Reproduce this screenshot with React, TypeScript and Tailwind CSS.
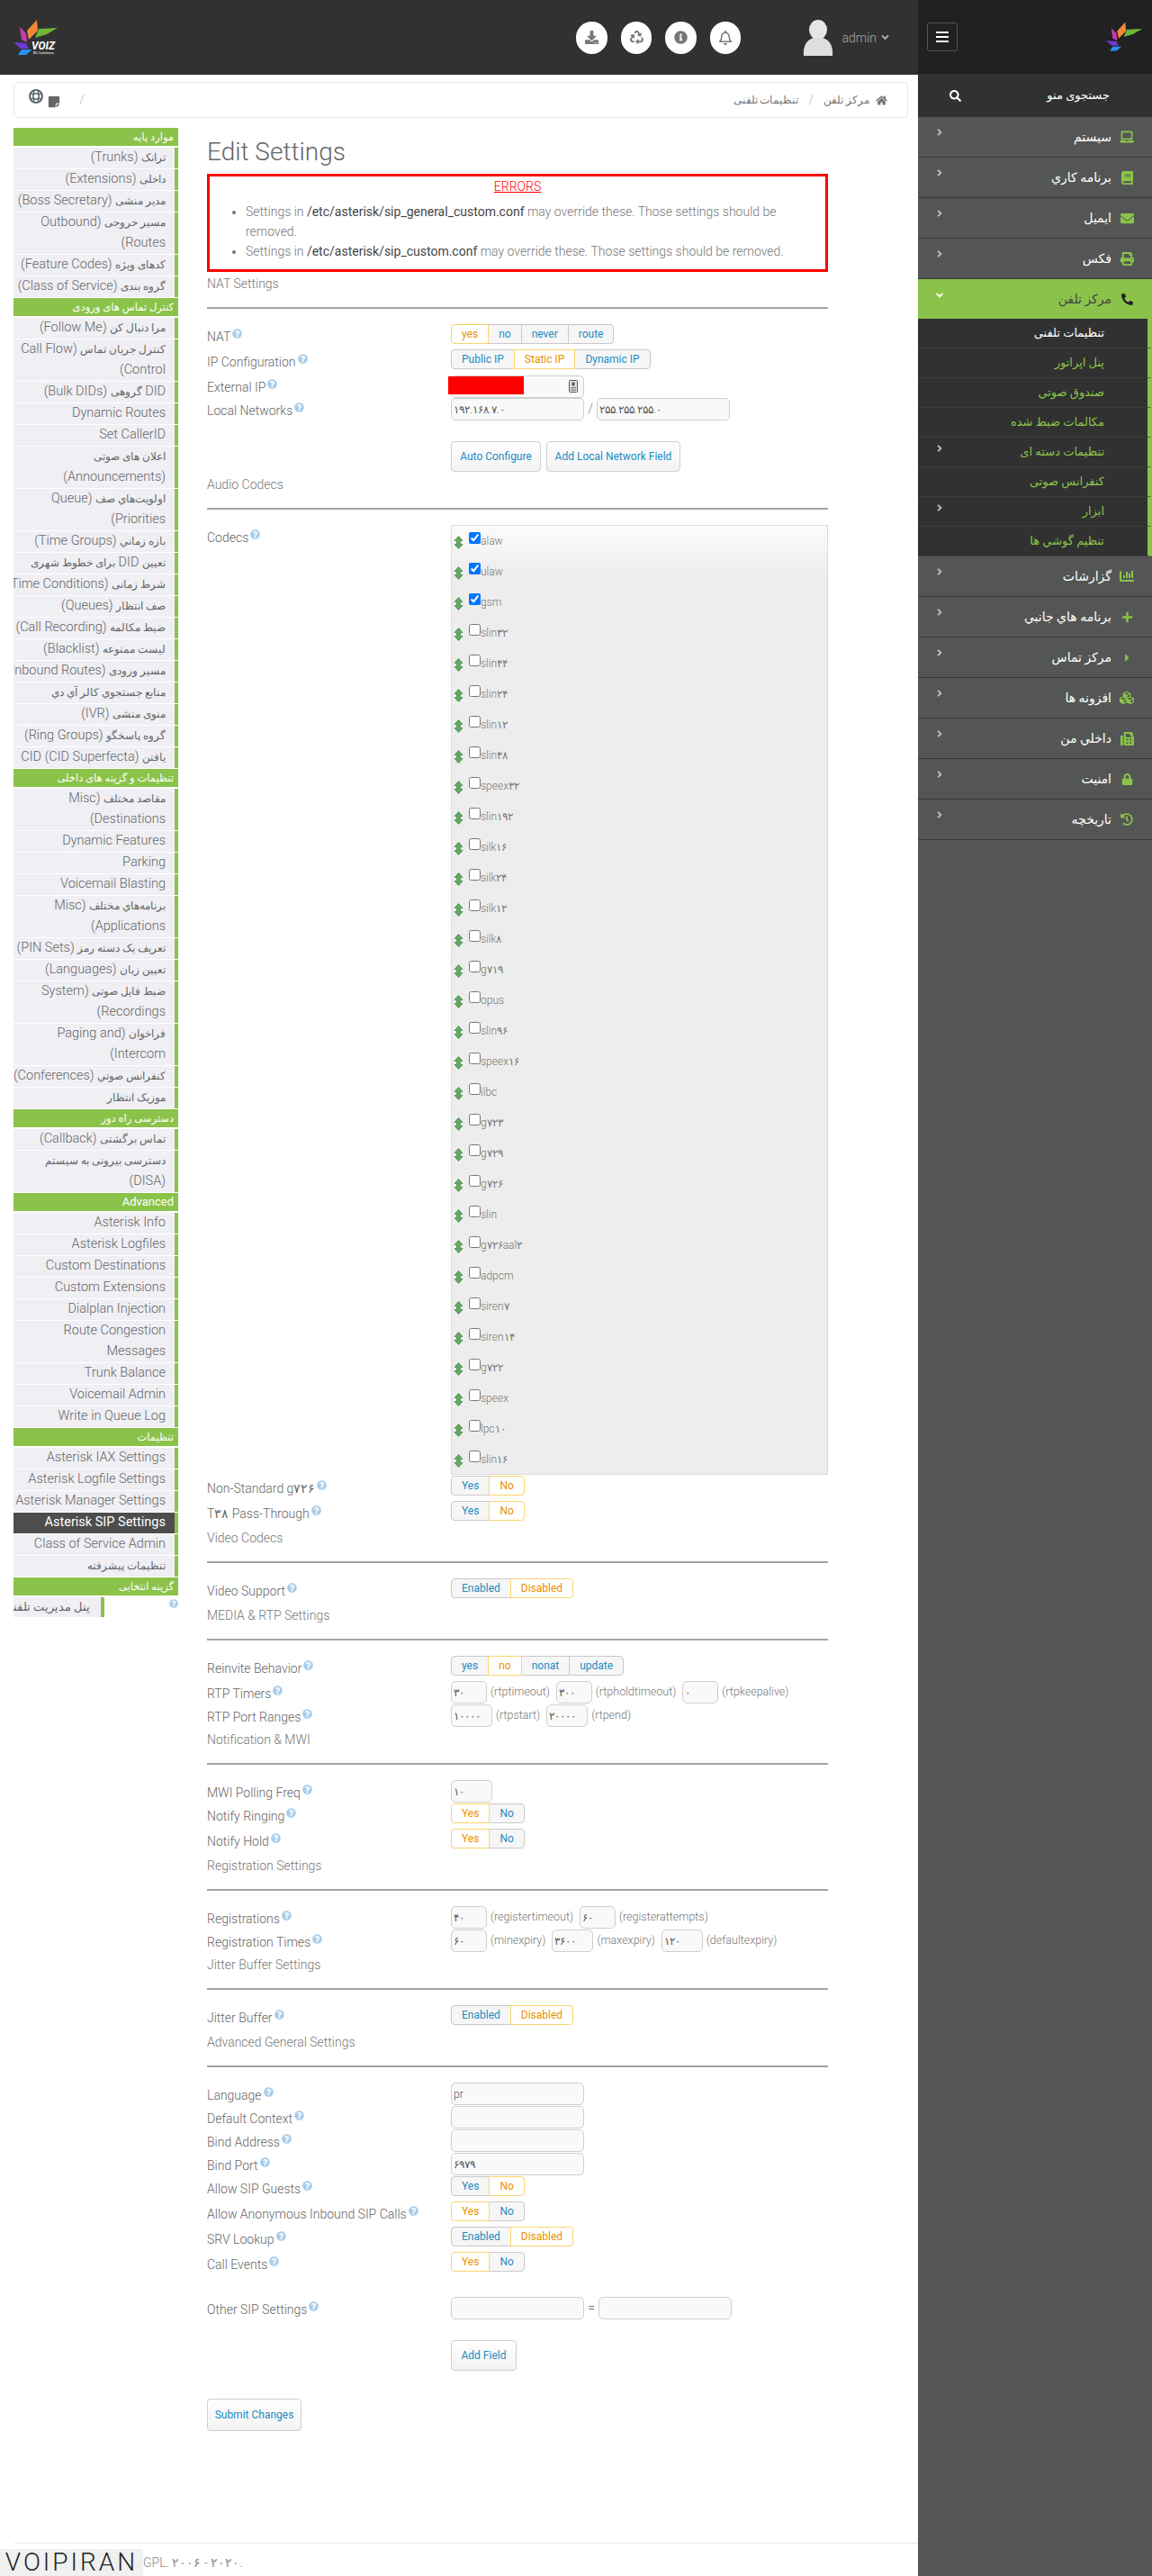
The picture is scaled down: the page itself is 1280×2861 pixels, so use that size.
import type { ReactNode } from 'react';
import {
  FaAngleDown,
  FaAngleRight,
  FaBook,
  FaCaretRight,
  FaChartBar,
  FaCubes,
  FaDownload,
  FaEnvelope,
  FaFax,
  FaHistory,
  FaHome,
  FaInfoCircle,
  FaLaptop,
  FaLock,
  FaPhone,
  FaPlus,
  FaPrint,
  FaQuestionCircle,
  FaRecycle,
  FaRegBell,
  FaSearch,
  FaStickyNote,
} from 'react-icons/fa';

const NAV: Array<{ title: string; items: string[] }> = [
  {
    title: 'موارد پایه',
    items: [
      'ترانک (Trunks)',
      'داخلی (Extensions)',
      'مدیر منشی (Boss Secretary)',
      'مسیر خروجی (Outbound|Routes)',
      'کدهای ویژه (Feature Codes)',
      'گروه بندی (Class of Service)',
    ],
  },
  {
    title: 'کنترل تماس های ورودی',
    items: [
      'مرا دنبال کن (Follow Me)',
      'کنترل جریان تماس (Call Flow|Control)',
      'DID گروهی (Bulk DIDs)',
      'Dynamic Routes',
      'Set CallerID',
      'اعلان های صوتی|(Announcements)',
      'اولویت‌هاي صف (Queue|Priorities)',
      'بازه زماني (Time Groups)',
      'تعیین DID برای خطوط شهری',
      'شرط زمانی (Time Conditions)',
      'صف انتظار (Queues)',
      'ضبط مکالمه (Call Recording)',
      'لیست ممنوعه (Blacklist)',
      'مسیر ورودی (Inbound Routes)',
      'منابع جستجوي کالر آي دي',
      'منوی منشی (IVR)',
      'گروه پاسخگو (Ring Groups)',
      'یافتن CID (CID Superfecta)',
    ],
  },
  {
    title: 'تنظیمات و گزینه های داخلی',
    items: [
      'مقاصد مختلف (Misc|Destinations)',
      'Dynamic Features',
      'Parking',
      'Voicemail Blasting',
      'برنامه‌هاي مختلف (Misc|Applications)',
      'تعریف یک دسته رمز (PIN Sets)',
      'تعیین زبان (Languages)',
      'ضبط فایل صوتی (System|Recordings)',
      'فراخوان (Paging and|Intercom)',
      'کنفرانس صوتي (Conferences)',
      'موزیک انتظار',
    ],
  },
  {
    title: 'دسترسی راه دور',
    items: ['تماس برگشتی (Callback)', 'دسترسی بیرونی به سیستم|(DISA)'],
  },
  {
    title: 'Advanced',
    items: [
      'Asterisk Info',
      'Asterisk Logfiles',
      'Custom Destinations',
      'Custom Extensions',
      'Dialplan Injection',
      'Route Congestion|Messages',
      'Trunk Balance',
      'Voicemail Admin',
      'Write in Queue Log',
    ],
  },
  {
    title: 'تنظیمات',
    items: [
      'Asterisk IAX Settings',
      'Asterisk Logfile Settings',
      'Asterisk Manager Settings',
      'Asterisk SIP Settings',
      'Class of Service Admin',
      'تنظیمات پیشرفته',
    ],
  },
];

const CODECS = [
  'alaw', 'ulaw', 'gsm', 'slin۳۲', 'slin۴۴', 'slin۲۴', 'slin۱۲', 'slin۴۸',
  'speex۳۲', 'slin۱۹۲', 'silk۱۶', 'silk۲۴', 'silk۱۲', 'silk۸', 'g۷۱۹', 'opus',
  'slin۹۶', 'speex۱۶', 'ilbc', 'g۷۲۳', 'g۷۲۹', 'g۷۲۶', 'slin', 'g۷۲۶aal۲',
  'adpcm', 'siren۷', 'siren۱۴', 'g۷۲۲', 'speex', 'lpc۱۰', 'slin۱۶',
];

const MENU_TOP = [
  { label: 'سیستم', icon: <FaLaptop size={16} /> },
  { label: 'برنامه کاري', icon: <FaBook size={15} /> },
  { label: 'ایمیل', icon: <FaEnvelope size={15} /> },
  { label: 'فکس', icon: <FaPrint size={15} /> },
];

const SUB_MENU = [
  { label: 'تنظیمات تلفنی' },
  { label: 'پنل اپراتور' },
  { label: 'صندوق صوتي' },
  { label: 'مکالمات ضبط شده' },
  { label: 'تنظیمات دسته ای', more: true },
  { label: 'کنفرانس صوتی' },
  { label: 'ابزار', more: true },
  { label: 'تنظیم گوشي ها' },
];

const MENU_BOTTOM = [
  { label: 'گزارشات', icon: <FaChartBar size={16} /> },
  { label: 'برنامه هاي جانبي', icon: <FaPlus size={13} /> },
  { label: 'مرکز تماس', icon: <FaCaretRight size={13} /> },
  { label: 'افزونه ها', icon: <FaCubes size={16} /> },
  { label: 'داخلي من', icon: <FaFax size={15} /> },
  { label: 'امنیت', icon: <FaLock size={13} /> },
  { label: 'تاریخچه', icon: <FaHistory size={14} /> },
];

function Petals() {
  return (
    <svg viewBox="0 0 50 40" className="h-full w-full">
      <polygon points="26,0 27,12 17,22 15,12" fill="#f0883a" />
      <polygon points="49,9 37,16 24,20 28,10" fill="#6fb536" />
      <polygon points="7,8 14,15 15,25 9,22" fill="#c63bb0" />
      <polygon points="0,25 14,26 17,32 8,32" fill="#6a3bd0" />
      <polygon points="5,39 9,33 21,33 14,39" fill="#2a8ff0" />
    </svg>
  );
}

// the Persian runs sit in a narrower size than the latin ones
function Mixed({ text, fa = 'text-[12px]' }: { text: string; fa?: string }) {
  return (
    <>
      {text.split(/([\u0600-\u06FF\u200c]+(?: [\u0600-\u06FF\u200c]+)*)/).map((part, i) =>
        i % 2 === 1 ? (
          <span key={i} className={fa}>
            {part}
          </span>
        ) : (
          part
        ),
      )}
    </>
  );
}

function Help() {
  return <FaQuestionCircle size={11} className="ml-[2px] mt-[2px] shrink-0 text-[#a8cdea]" />;
}

function Row({ label, children, h = 'h-[28px]' }: { label: string; children: ReactNode; h?: string }) {
  return (
    <div className={`flex ${h}`}>
      <div className="flex w-[271px] shrink-0 items-start pt-[3px] text-sm leading-[22px] font-light text-[#666]">
        <span>{label}</span>
        <Help />
      </div>
      <div className="flex items-start">{children}</div>
    </div>
  );
}

function Toggle({ options, active }: { options: string[]; active: number }) {
  return (
    <div className="flex">
      {options.map((o, i) => (
        <button
          key={o}
          type="button"
          className={`-ml-px h-[22px] border px-[11px] text-xs first:ml-0 first:rounded-l-[4px] last:rounded-r-[4px] ${
            i === active
              ? 'relative border-[#fbd46a] bg-white text-[#eb8f00]'
              : 'border-[#c9c9c9] bg-[#f6f6f6] text-[#1d8bc0]'
          }`}
        >
          {o}
        </button>
      ))}
    </div>
  );
}

function Field({ value = '', w = 'w-[148px]' }: { value?: string; w?: string }) {
  return (
    <input
      readOnly
      defaultValue={value}
      className={`${w} h-[25px] shrink-0 rounded-[5px] border border-[#cfcfcf] bg-[#f9f9f9] pl-[2px] text-xs font-light text-[#555] outline-none`}
    />
  );
}

function Hint({ children }: { children: ReactNode }) {
  return <span className="mr-[7px] ml-1 text-[12.5px] leading-[24px] font-light whitespace-nowrap text-[#777]">{children}</span>;
}

function Section({ title, top = 'mt-[2px]' }: { title: string; top?: string }) {
  return (
    <div className={`${top} h-[56px]`}>
      <div className="h-[22px] text-sm leading-[22px] font-light text-[#777]">{title}</div>
      <hr className="mt-[15px] border-t-2 border-[#a3a3a3]" />
    </div>
  );
}

function ActionButton({ children, className = '' }: { children: ReactNode; className?: string }) {
  return (
    <button
      type="button"
      className={`rounded-[4px] border border-[#cfcfcf] bg-gradient-to-b from-white to-[#f2f2f2] text-xs whitespace-nowrap text-[#1d8bc0] ${className}`}
    >
      {children}
    </button>
  );
}

function NavHeader({ title }: { title: string }) {
  return (
    <div className="mb-[2px] h-5 bg-[#8bc34a] pr-[5px] text-[13px] leading-5 font-normal text-white">
      <Mixed text={title} fa="text-[11.5px]" />
    </div>
  );
}

function NavList() {
  return (
    <div className="w-[183px] shrink-0 self-start text-[14.5px] leading-[22px] font-light text-[#666]" dir="rtl">
      {NAV.map((group) => (
        <div key={group.title}>
          <NavHeader title={group.title} />
          {group.items.map((item) => {
            const active = item === 'Asterisk SIP Settings';
            return (
              <div
                key={item}
                className={`mb-px overflow-hidden border-r-4 border-[#8bc34a] pr-[10px] whitespace-nowrap ${
                  active ? 'bg-[#4d4d4d] font-normal text-white' : 'bg-[#efeff4]'
                }`}
              >
                {item.split('|').map((line) => (
                  <div key={line} className="h-[23px]">
                    <Mixed text={line} />
                  </div>
                ))}
              </div>
            );
          })}
        </div>
      ))}
      <NavHeader title="گزینه انتخابی" />
      <div className="flex justify-between">
        <FaQuestionCircle size={10} className="mt-[2px] text-[#a8cdea]" />
        <div className="w-[101px] overflow-hidden border-r-4 border-[#8bc34a] bg-[#efeff4] pr-[12px] text-[13px] whitespace-nowrap">پنل مدیریت تلفنی</div>
      </div>
    </div>
  );
}

function SettingsForm() {
  return (
    <div className="ml-8 w-[690px]">
      <h1 className="h-[51px] pt-[10px] text-[28px] leading-[34px] font-light text-[#666]">Edit Settings</h1>

      <div className="h-[109px] border-[3px] border-[#ff0000] text-sm leading-[22px] font-light text-[#777]">
        <div className="text-center text-[#ff0000] underline">ERRORS</div>
        <ul className="mt-[6px] list-disc pl-10">
          <li>
            Settings in <b className="font-normal text-[#444]">/etc/asterisk/sip_general_custom.conf</b> may override these. Those settings should be removed.
          </li>
          <li>
            Settings in <b className="font-normal text-[#444]">/etc/asterisk/sip_custom.conf</b> may override these. Those settings should be removed.
          </li>
        </ul>
      </div>

      <Section title="NAT Settings" />
      <Row label="NAT"><Toggle options={['yes', 'no', 'never', 'route']} active={0} /></Row>
      <Row label="IP Configuration"><Toggle options={['Public IP', 'Static IP', 'Dynamic IP']} active={1} /></Row>
      <Row label="External IP" h="h-[26px]">
        <div className="relative">
          <Field />
          <div className="absolute top-[2px] -left-[3px] h-5 w-[84px] bg-[#ff0000]" />
          <svg viewBox="0 0 10 14" className="absolute top-[6px] right-[7px] h-[14px] w-[10px]">
            <rect x="0.5" y="0.5" width="9" height="13" rx="1" fill="#e4e4e4" stroke="#555" />
            <rect x="3.5" y="2.5" width="3" height="4" fill="#555" />
            <rect x="2" y="8" width="6" height="1.5" fill="#888" />
            <rect x="2" y="10.5" width="6" height="1.5" fill="#888" />
          </svg>
        </div>
      </Row>
      <Row label="Local Networks" h="h-[26px]">
        <Field value="۱۹۲.۱۶۸.۷.۰" />
        <span className="w-[14px] text-center text-sm leading-[24px] font-light text-[#777]">/</span>
        <Field value="۲۵۵.۲۵۵.۲۵۵.۰" />
      </Row>
      <div className="mt-[22px] ml-[271px] flex gap-[6px]">
        <ActionButton className="h-[34px] w-[100px]">Auto Configure</ActionButton>
        <ActionButton className="h-[34px] w-[149px]">Add Local Network Field</ActionButton>
      </div>

      <Section title="Audio Codecs" top="mt-[3px]" />
      <div className="flex">
        <div className="flex w-[271px] shrink-0 items-start pt-[3px] text-sm leading-[22px] font-light text-[#666]">
          <span>Codecs</span>
          <Help />
        </div>
        <div className="h-[1055px] w-[419px] border border-[#dcdcdc] bg-gradient-to-b from-[#fbfbfb] to-[#ededed] to-[5%] pl-[2px]">
          {CODECS.map((c, i) => (
            <div key={c} className="flex h-[34px] items-start pt-[7px]">
              <svg viewBox="0 0 11 15" className="mt-[4px] h-[15px] w-[11px] shrink-0">
                <path d="M5.5 0.5L10 5.5H7.5V9.5H10L5.5 14.5L1 9.5H3.5V5.5H1Z" fill="#62ab62" stroke="#3f7f3f" strokeWidth="0.7" />
              </svg>
              <input type="checkbox" readOnly defaultChecked={i < 3} className="mt-0 ml-[6px] h-[13px] w-[13px] shrink-0" />
              <span className="mt-[3px] text-xs leading-[14px] font-light text-[#777]">{c}</span>
            </div>
          ))}
        </div>
      </div>
      <div className="mt-px">
        <Row label="Non-Standard g۷۲۶"><Toggle options={['Yes', 'No']} active={1} /></Row>
      </div>
      <Row label="T۳۸ Pass-Through"><Toggle options={['Yes', 'No']} active={1} /></Row>

      <Section title="Video Codecs" />
      <Row label="Video Support"><Toggle options={['Enabled', 'Disabled']} active={1} /></Row>

      <Section title="MEDIA & RTP Settings" />
      <Row label="Reinvite Behavior"><Toggle options={['yes', 'no', 'nonat', 'update']} active={1} /></Row>
      <Row label="RTP Timers" h="h-[26px]">
        <Field value="۳۰" w="w-[40px]" />
        <Hint>(rtptimeout)</Hint>
        <Field value="۳۰۰" w="w-[40px]" />
        <Hint>(rtpholdtimeout)</Hint>
        <Field value="۰" w="w-[40px]" />
        <Hint>(rtpkeepalive)</Hint>
      </Row>
      <Row label="RTP Port Ranges" h="h-[26px]">
        <Field value="۱۰۰۰۰" w="w-[46px]" />
        <Hint>(rtpstart)</Hint>
        <Field value="۲۰۰۰۰" w="w-[46px]" />
        <Hint>(rtpend)</Hint>
      </Row>

      <Section title="Notification & MWI" />
      <Row label="MWI Polling Freq" h="h-[26px]"><Field value="۱۰" w="w-[46px]" /></Row>
      <Row label="Notify Ringing"><Toggle options={['Yes', 'No']} active={0} /></Row>
      <Row label="Notify Hold"><Toggle options={['Yes', 'No']} active={0} /></Row>

      <Section title="Registration Settings" />
      <Row label="Registrations" h="h-[26px]">
        <Field value="۴۰" w="w-[40px]" />
        <Hint>(registertimeout)</Hint>
        <Field value="۶۰" w="w-[40px]" />
        <Hint>(registerattempts)</Hint>
      </Row>
      <Row label="Registration Times" h="h-[26px]">
        <Field value="۶۰" w="w-[40px]" />
        <Hint>(minexpiry)</Hint>
        <Field value="۳۶۰۰" w="w-[46px]" />
        <Hint>(maxexpiry)</Hint>
        <Field value="۱۲۰" w="w-[46px]" />
        <Hint>(defaultexpiry)</Hint>
      </Row>

      <Section title="Jitter Buffer Settings" />
      <Row label="Jitter Buffer"><Toggle options={['Enabled', 'Disabled']} active={1} /></Row>

      <Section title="Advanced General Settings" />
      <Row label="Language" h="h-[26px]"><Field value="pr" /></Row>
      <Row label="Default Context" h="h-[26px]"><Field /></Row>
      <Row label="Bind Address" h="h-[26px]"><Field /></Row>
      <Row label="Bind Port" h="h-[26px]"><Field value="۶۹۷۹" /></Row>
      <Row label="Allow SIP Guests"><Toggle options={['Yes', 'No']} active={1} /></Row>
      <Row label="Allow Anonymous Inbound SIP Calls"><Toggle options={['Yes', 'No']} active={0} /></Row>
      <Row label="SRV Lookup"><Toggle options={['Enabled', 'Disabled']} active={1} /></Row>
      <Row label="Call Events"><Toggle options={['Yes', 'No']} active={0} /></Row>

      <div className="mt-[22px]">
        <Row label="Other SIP Settings" h="h-[26px]">
          <Field />
          <span className="w-4 text-center text-sm leading-[24px] font-light text-[#777]">=</span>
          <Field />
        </Row>
      </div>
      <div className="mt-[22px] ml-[271px]">
        <ActionButton className="h-[34px] w-[73px]">Add Field</ActionButton>
      </div>
      <ActionButton className="mt-[31px] h-9 w-[105px]">Submit Changes</ActionButton>
    </div>
  );
}

function SideMenuItem({ label, icon }: { label: string; icon: ReactNode }) {
  return (
    <div className="flex h-[45px] items-start justify-between border-b border-[#383838] bg-[#545655] pr-5 pl-[18px] text-[14px] text-white">
      <FaAngleRight size={12} className="mt-[11px] text-[#bdbdbd]" />
      <div className="flex h-full items-center gap-[9px]">
        <span dir="rtl">{label}</span>
        <span className="flex w-[16px] justify-center text-[#8bc34a]">{icon}</span>
      </div>
    </div>
  );
}

function SideMenu() {
  return (
    <aside className="w-[260px] shrink-0 bg-[#545655]">
      <div className="flex h-[82px] items-center justify-between bg-[#212121] pr-[10px] pl-[10px]">
        <button type="button" className="flex h-8 w-[34px] flex-col items-center justify-center gap-[3px] rounded-[3px] border border-[#555]">
          <span className="h-[2px] w-[14px] bg-white" />
          <span className="h-[2px] w-[14px] bg-white" />
          <span className="h-[2px] w-[14px] bg-white" />
        </button>
        <div className="h-[34px] w-[41px]">
          <Petals />
        </div>
      </div>
      <div className="flex h-[48px] items-center justify-between bg-[#313131] pr-[47px] pl-[35px] text-[13px] text-white">
        <FaSearch size={13} />
        <span dir="rtl">جستجوی منو</span>
      </div>
      {MENU_TOP.map((m) => (
        <SideMenuItem key={m.label} {...m} />
      ))}
      <div className="flex h-[44px] items-start justify-between bg-[#8bc34a] pr-5 pl-[18px] text-[14px] text-[#444]">
        <FaAngleDown size={12} className="mt-[12px] text-white" />
        <div className="flex h-full items-center gap-[9px]">
          <span dir="rtl">مرکز تلفن</span>
          <span className="flex w-[16px] justify-center text-[#222]">
            <FaPhone size={13} className="-scale-x-100" />
          </span>
        </div>
      </div>
      <div className="bg-[#313131]">
        {SUB_MENU.map((s, i) => (
          <div
            key={s.label}
            className={`flex h-[33px] items-center justify-between border-r-[5px] border-b border-r-[#8bc34a] border-b-[#3d3d3d] pr-[48px] pl-[18px] text-[13px] ${
              i === 0 ? 'text-white' : 'text-[#8bc34a]'
            }`}
          >
            {s.more ? <FaAngleRight size={12} className="-mt-2 text-[#bdbdbd]" /> : <span />}
            <span dir="rtl">{s.label}</span>
          </div>
        ))}
      </div>
      {MENU_BOTTOM.map((m) => (
        <SideMenuItem key={m.label} {...m} />
      ))}
    </aside>
  );
}

export default function App() {
  return (
    <div className="flex h-[2861px] w-[1280px] overflow-hidden bg-white [font-family:Roboto,'DejaVu_Sans',sans-serif]">
      <div className="flex w-[1020px] shrink-0 flex-col">
        <header className="flex h-[83px] shrink-0 items-center justify-between bg-[#313131] pr-[30px] pl-[15px]">
          <div className="relative h-10 w-[50px]">
            <Petals />
            <span className="absolute top-[23px] left-[20px] text-[12px] leading-3 font-bold text-white italic">VOIZ</span>
            <span className="absolute top-[34px] left-[22px] text-[4px] leading-[5px] whitespace-nowrap text-white">RC Solutions</span>
          </div>
          <div className="flex items-center">
            <div className="flex gap-[15px] text-[#777]">
              {[<FaDownload size={15} />, <FaRecycle size={15} />, <FaInfoCircle size={15} />, <FaRegBell size={16} />].map((icon, i) => (
                <span key={i} className="flex h-9 w-[34.5px] items-center justify-center rounded-full bg-white">
                  {icon}
                </span>
              ))}
            </div>
            <svg viewBox="0 0 34 40" className="mr-[9px] ml-[69px] h-10 w-[34px]">
              <ellipse cx="17" cy="11" rx="10" ry="11" fill="#e6e6e6" />
              <path d="M1 40C0 28 5 22 12 20H22C29 22 34 28 33 40Z" fill="#dedede" />
            </svg>
            <span className="text-sm font-light text-[#aaa]">admin</span>
            <FaAngleDown size={13} className="ml-[3px] text-[#aaa]" />
          </div>
        </header>

        <div className="mt-2 ml-[15px] flex h-10 w-[994px] shrink-0 items-center justify-between rounded-[4px] border border-[#e6e6e6] pr-[22px] pl-4 text-xs font-light text-[#777]">
          <div className="flex items-center">
            <svg viewBox="0 0 16 16" className="-mt-2 h-4 w-4">
              <circle cx="8" cy="8" r="7" fill="none" stroke="#5a6a72" strokeWidth="2" />
              <circle cx="8" cy="8" r="3.2" fill="none" stroke="#5a6a72" strokeWidth="1.5" />
              <path d="M5.5 1.5V5.5H1.5M10.5 1.5V5.5H14.5M5.5 14.5V10.5H1.5M10.5 14.5V10.5H14.5" fill="none" stroke="#5a6a72" strokeWidth="1.4" />
            </svg>
            <FaStickyNote size={14} className="mt-1 ml-[5px] text-[#666]" />
            <span className="ml-[21px] text-sm text-[#bbb]">/</span>
          </div>
          <div className="flex items-center gap-[11px]" dir="rtl">
            <span className="flex items-center gap-[7px]">
              <FaHome size={13} />
              مرکز تلفن
            </span>
            <span className="text-sm text-[#bbb]">/</span>
            <span>تنظیمات تلفنی</span>
          </div>
        </div>

        <div className="mt-[11px] ml-[15px] flex">
          <NavList />
          <SettingsForm />
        </div>

        <footer className="mt-auto shrink-0">
          <div className="ml-4 h-[7px] border-t border-[#e6e6e6]" />
          <div className="flex h-[30px] items-center">
            <div className="flex h-[30px] w-[159px] items-center justify-center bg-[#f0f0f0] text-[28px] leading-none font-light tracking-[3px] text-[#222]">
              VOIPIRAN
            </div>
            <span className="text-sm font-light text-[#888]">GPL. ۲۰۰۶ - ۲۰۲۰.</span>
          </div>
        </footer>
      </div>
      <SideMenu />
    </div>
  );
}
